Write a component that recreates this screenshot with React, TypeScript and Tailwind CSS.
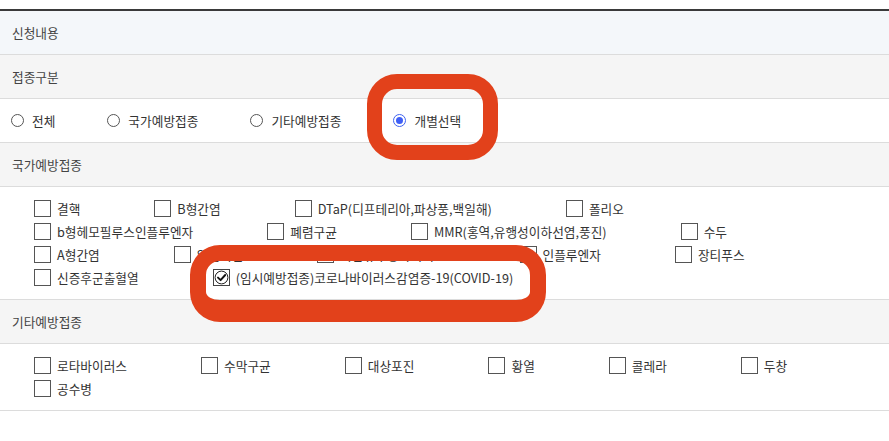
import React from "react";

function Radio({ label, checked }: { label: string; checked?: boolean }) {
  return (
    <div className="flex items-center mr-[52px]">
      {checked ? (
        <span className="w-[13px] h-[13px] rounded-full border border-[#3f63f0] bg-white flex items-center justify-center">
          <span className="w-[7px] h-[7px] rounded-full bg-[#3f5ff5]" />
        </span>
      ) : (
        <span className="w-[13px] h-[13px] rounded-full border border-[#555] bg-white" />
      )}
      <span className="ml-[8px] text-[12.7px] text-[#333]">{label}</span>
    </div>
  );
}

function CheckedIcon() {
  return (
    <svg width="17" height="17" viewBox="0 0 17 17" className="shrink-0">
      <rect x="0.5" y="0.5" width="16" height="16" fill="#fff" stroke="#444" />
      <circle cx="8.5" cy="8.5" r="6.4" fill="none" stroke="#222" strokeWidth="1" />
      <path d="M5 8.6 L7.6 11.2 L12.2 6" fill="none" stroke="#111" strokeWidth="1.9" strokeLinecap="round" strokeLinejoin="round" />
    </svg>
  );
}

function Check({ label, checked }: { label: string; checked?: boolean }) {
  return (
    <div className="flex items-center h-[23px] mr-[74px]">
      {checked ? (
        <CheckedIcon />
      ) : (
        <span className="w-[17px] h-[17px] border border-[#555] bg-white shrink-0" />
      )}
      <span className="ml-[6px] text-[12.7px] text-[#333] whitespace-nowrap">{label}</span>
    </div>
  );
}

function Header({ label, blue }: { label: string; blue?: boolean }) {
  return (
    <div
      className={`h-[44px] flex items-center pl-[12px] border-b border-[#dcdcdc] text-[12.7px] text-[#444] ${
        blue ? "bg-[#f4f7fa]" : "bg-[#f5f5f5]"
      }`}
    >
      {label}
    </div>
  );
}

export default function App() {
  const national = [
    "결핵",
    "B형간염",
    "DTaP(디프테리아,파상풍,백일해)",
    "폴리오",
    "b형헤모필루스인플루엔자",
    "폐렴구균",
    "MMR(홍역,유행성이하선염,풍진)",
    "수두",
    "A형간염",
    "일본뇌염",
    "사람유두종바이러스",
    "인플루엔자",
    "장티푸스",
    "신증후군출혈열",
  ];
  const other = ["로타바이러스", "수막구균", "대상포진", "황열", "콜레라", "두창", "공수병"];
  return (
    <div className="relative w-[889px] h-[441px] bg-white overflow-hidden font-['Noto_Sans_CJK_KR','Noto_Sans',sans-serif]">
      <div className="mt-[9px] border-t-2 border-[#3a3a3a]">
        <Header label="신청내용" blue />
        <Header label="접종구분" />
        <div className="h-[44px] flex items-center pl-[11px] border-b border-[#dcdcdc] bg-white">
          <Radio label="전체" />
          <Radio label="국가예방접종" />
          <Radio label="기타예방접종" />
          <Radio label="개별선택" checked />
        </div>
        <Header label="국가예방접종" />
        <div className="flex flex-wrap pl-[34px] pr-[4px] pt-[10px] pb-[10px] border-b border-[#dcdcdc] bg-white">
          {national.map((n) => (
            <Check key={n} label={n} />
          ))}
          <Check label="(임시예방접종)코로나바이러스감염증-19(COVID-19)" checked />
        </div>
        <Header label="기타예방접종" />
        <div className="flex flex-wrap pl-[34px] pr-[4px] pt-[10px] pb-[10px] border-b border-[#dcdcdc] bg-white">
          {other.map((n) => (
            <Check key={n} label={n} />
          ))}
        </div>
      </div>

      <div className="absolute left-[367px] top-[74px] w-[131px] h-[86px] border-[15px] border-[#e2411b] rounded-[30px]" />
      <div className="absolute left-[190px] top-[245px] w-[356px] h-[77px] border-l-[16px] border-r-[16px] border-t-[16px] border-b-[22px] border-[#e2411b] rounded-[30px]" />
    </div>
  );
}
